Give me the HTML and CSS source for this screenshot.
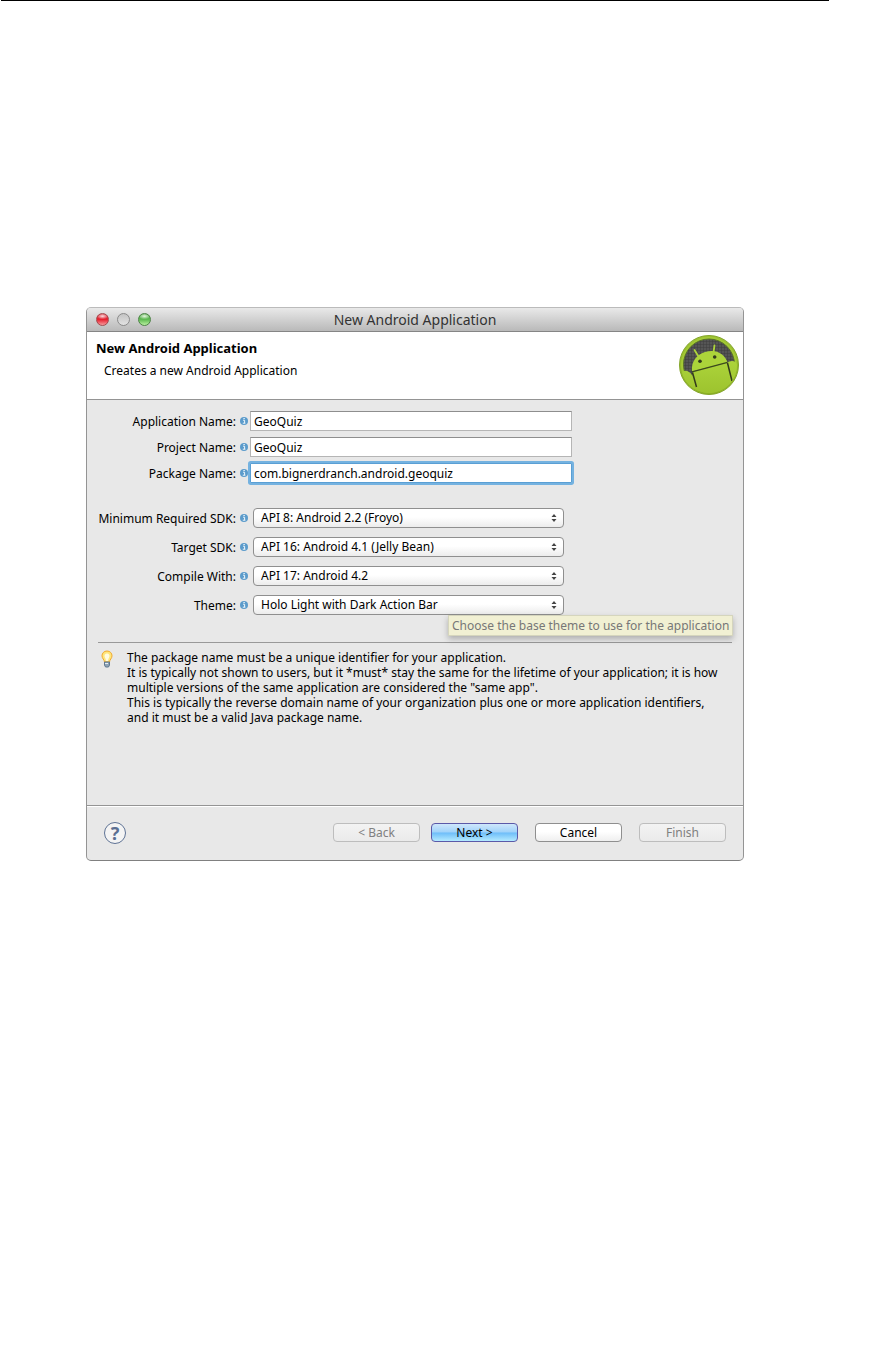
FILE: index.html
```html
<!DOCTYPE html>
<html lang="en">
<head>
    <meta charset="UTF-8">
    <meta name="viewport" content="width=device-width, initial-scale=1.0">
    <link rel="stylesheet" href="styles.css">
    <title>New Android Application</title>
</head>
<body>
    <!-- shared info icon -->
    <svg class="symbols" width="0" height="0">
        <symbol id="info" viewBox="0 0 8 8">
            <circle cx="4" cy="4" r="4" fill="#5b9bcb"/>
            <path d="M3 3.2h1.6v3M2.8 6.2h2.6M3.4 1.5h1.4" stroke="#eef6fb" stroke-width="1" fill="none"/>
        </symbol>
    </svg>
    <div class="page">
        <hr class="page-rule">
        <main class="window">
            <div class="titlebar">
                <div class="lights">
                    <span class="light red"></span>
                    <span class="light gray"></span>
                    <span class="light green"></span>
                </div>
                <span class="window-title">New Android Application</span>
            </div>
            <header class="banner">
                <div>
                    <h1>New Android Application</h1>
                    <p>Creates a new Android Application</p>
                </div>
                <svg class="logo" viewBox="0 0 60 60" width="60" height="60">
                    <defs>
                        <linearGradient id="rim" x1="0" y1="0" x2="0" y2="1">
                            <stop offset="0" stop-color="#9cc233"/>
                            <stop offset="1" stop-color="#8eb324"/>
                        </linearGradient>
                        <linearGradient id="body" x1="0" y1="0" x2="0" y2="1">
                            <stop offset="0" stop-color="#acd43a"/>
                            <stop offset="1" stop-color="#9cc22e"/>
                        </linearGradient>
                        <pattern id="mesh" width="3" height="3" patternUnits="userSpaceOnUse">
                            <rect width="3" height="3" fill="#555"/>
                            <path d="M0 0h3M0 0v3" stroke="#3c3c3c" stroke-width="1"/>
                        </pattern>
                        <clipPath id="inner"><circle cx="30" cy="30" r="28"/></clipPath>
                    </defs>
                    <circle cx="30" cy="30" r="29.5" fill="url(#rim)" stroke="#84a52a" stroke-width="1"/>
                    <circle cx="30" cy="30" r="28" fill="#a4ca35"/>
                    <circle cx="30" cy="29.5" r="25.5" fill="url(#mesh)" stroke="#58702a" stroke-width="1"/>
                    <g clip-path="url(#inner)">
                        <path d="M2 60V38Q6 34 10 37Q12 38 13.5 41V36.5L48.5 27.5Q50 26 53 26Q57 26 58 30V60Z" fill="url(#body)"/>
                        <path d="M13 36.5C12 27 17 20 26 17C37 13.5 46 19 48.5 27.5Z" fill="#acd43a"/>
                        <path d="M15.5 15L19.5 21.5M35.5 10.5L34.5 17" stroke="#acd43a" stroke-width="1.8" stroke-linecap="round"/>
                        <path d="M13 36.8L48.5 27.3" stroke="#3c4a1d" stroke-width="1.3"/>
                        <path d="M13.5 37.5L17.5 52M48.5 28L53 46" stroke="#333b1c" stroke-width="1.5"/>
                        <circle cx="21" cy="26.3" r="1.8" fill="#333b1c"/>
                        <circle cx="35.7" cy="22" r="1.8" fill="#333b1c"/>
                    </g>
                </svg>
            </header>
            <form class="wizard">
                <div class="content">
                    <div class="fields names">
                        <label for="app-name">Application Name: <svg class="info"><use href="#info"/></svg></label>
                        <input type="text" id="app-name" value="GeoQuiz">
                        <label for="project-name">Project Name: <svg class="info"><use href="#info"/></svg></label>
                        <input type="text" id="project-name" value="GeoQuiz">
                        <label for="package-name">Package Name: <svg class="info"><use href="#info"/></svg></label>
                        <input type="text" id="package-name" class="active" value="com.bignerdranch.android.geoquiz">
                    </div>
                    <div class="fields targets">
                        <label for="min-sdk">Minimum Required SDK: <svg class="info"><use href="#info"/></svg></label>
                        <div class="popup">
                            <select id="min-sdk"><option>API 8: Android 2.2 (Froyo)</option></select>
                            <svg class="arrows" viewBox="0 0 6 8"><path d="M3 0L5.5 3H.5ZM3 8L.5 5H5.5Z"/></svg>
                        </div>
                        <label for="target-sdk">Target SDK: <svg class="info"><use href="#info"/></svg></label>
                        <div class="popup">
                            <select id="target-sdk"><option>API 16: Android 4.1 (Jelly Bean)</option></select>
                            <svg class="arrows" viewBox="0 0 6 8"><path d="M3 0L5.5 3H.5ZM3 8L.5 5H5.5Z"/></svg>
                        </div>
                        <label for="compile-with">Compile With: <svg class="info"><use href="#info"/></svg></label>
                        <div class="popup">
                            <select id="compile-with"><option>API 17: Android 4.2</option></select>
                            <svg class="arrows" viewBox="0 0 6 8"><path d="M3 0L5.5 3H.5ZM3 8L.5 5H5.5Z"/></svg>
                        </div>
                        <label for="theme">Theme: <svg class="info"><use href="#info"/></svg></label>
                        <div class="popup">
                            <select id="theme"><option>Holo Light with Dark Action Bar</option></select>
                            <svg class="arrows" viewBox="0 0 6 8"><path d="M3 0L5.5 3H.5ZM3 8L.5 5H5.5Z"/></svg>
                            <div class="tooltip" role="tooltip">Choose the base theme to use for the application</div>
                        </div>
                    </div>
                    <div class="hint">
                        <svg class="bulb" viewBox="0 0 12 18" width="12" height="18">
                            <path d="M6 1C3 1 1 3.2 1 5.8C1 8.5 3.3 9.5 3.5 12H8.5C8.7 9.5 11 8.5 11 5.8C11 3.2 9 1 6 1Z" fill="#ffe67c" stroke="#f0a92e"/>
                            <path d="M6 3.5C4.5 3.5 3.5 4.5 3.5 6C3.5 7.5 5 8.5 5 11H7C7 8.5 8.5 7.5 8.5 6C8.5 4.5 7.5 3.5 6 3.5Z" fill="#fffbe0"/>
                            <path d="M3.5 12H8.5V15L7.5 17H4.5L3.5 15Z" fill="#8fa3b5" stroke="#5f7890"/>
                            <path d="M4 13.5H7" stroke="#e3ecf2"/>
                        </svg>
                        <p>The package name must be a unique identifier for your application.<br>
                        It is typically not shown to users, but it *must* stay the same for the lifetime of your application; it is how<br>
                        multiple versions of the same application are considered the "same app".<br>
                        This is typically the reverse domain name of your organization plus one or more application identifiers,<br>
                        and it must be a valid Java package name.</p>
                    </div>
                </div>
                <footer class="actions">
                    <button type="button" class="help" aria-label="Help">?</button>
                    <div class="nav">
                        <button type="button" class="btn" disabled>&lt; Back</button>
                        <button type="button" class="btn default">Next &gt;</button>
                    </div>
                    <button type="button" class="btn">Cancel</button>
                    <button type="button" class="btn" disabled>Finish</button>
                </footer>
            </form>
        </main>
    </div>
</body>
</html>
```

FILE: styles.css
```css
* {
    box-sizing: border-box;
}

body {
    margin: 0;
    background: #fff;
    color: #000;
    font-family: "Noto Sans", "Open Sans", sans-serif;
    font-size: 12px;
    line-height: 15px;
}

h1, p {
    margin: 0;
}

input, select, button {
    font-family: inherit;
    font-size: 12px;
    color: #000;
}

.symbols {
    position: absolute;
}

.page {
    padding: 0 53px 0 1px;
}

.page-rule {
    height: 1px;
    margin: 0 0 306px;
    border: 0;
    background: #000;
}

/* Window frame */
.window {
    margin: 0 85px;
    border: 1px solid #949494;
    border-top-color: #bbb;
    border-bottom-color: #808080;
    border-radius: 5px;
    background: #e8e8e8;
}

.titlebar {
    display: grid;
    grid-template-columns: 1fr auto 1fr;
    align-items: center;
    height: 24px;
    border-bottom: 1px solid #858585;
    border-radius: 4px 4px 0 0;
    background: linear-gradient(#e9e9e9, #b9b9b9);
}

.lights {
    display: flex;
    gap: 8px;
    padding-left: 9px;
}

.light {
    width: 13px;
    height: 13px;
    border: 1px solid #8a8a8a;
    border-radius: 50%;
}

.red {
    border-color: #a34a4e;
    background: radial-gradient(ellipse 6px 3px at 50% 20%, #fbe0e2, transparent), linear-gradient(#d8323e, #e8202f 50%, #f79a9c);
}

.gray {
    background: linear-gradient(#c4c4c4, #e2e2e2);
}

.green {
    border-color: #4c8345;
    background: radial-gradient(ellipse 6px 3px at 50% 20%, #e6f8df, transparent), linear-gradient(#5aa852, #5fbb52 50%, #b9f0a0);
}

.window-title {
    font-size: 14px;
    color: #333;
}

/* Banner */
.banner {
    display: flex;
    justify-content: space-between;
    height: 68px;
    padding: 3px 4px 3px 9px;
    border-bottom: 1px solid #949494;
    background: #fff;
}

.banner h1 {
    padding-top: 4px;
    font-size: 13px;
    line-height: 18px;
}

.banner p {
    padding: 6px 0 0 8px;
}

/* Form */
.content {
    min-height: 406px;
    padding: 11px;
    border-bottom: 1px solid #949494;
}

.fields {
    display: grid;
    grid-template-columns: 150px minmax(0, 322px);
    column-gap: 2px;
    align-items: center;
}

.fields label {
    display: flex;
    justify-content: flex-end;
    align-items: center;
    gap: 4px;
    white-space: nowrap;
}

.info {
    width: 8px;
    height: 8px;
}

.names {
    row-gap: 6px;
}

.names input {
    height: 20px;
    padding: 0 3px;
    border: 1px solid #b5b5b5;
    border-top-color: #8e8e8e;
    background: #fff;
    outline: none;
}

.names .active {
    border-color: #5a9fd4;
    border-radius: 1px;
    box-shadow: 0 0 0 2px #74b2e0;
}

.targets {
    row-gap: 9px;
    padding: 25px 0 27px;
    border-bottom: 1px solid #999;
}

.popup {
    position: relative;
    display: flex;
    margin: 0 8px 0 3px;
}

.popup select {
    width: 100%;
    height: 20px;
    padding: 0 20px 1px 7px;
    border: 1px solid #8f8f8f;
    border-radius: 4px;
    background: linear-gradient(#fff, #fff 45%, #ececec);
    appearance: none;
}

.arrows {
    position: absolute;
    top: 6px;
    right: 7px;
    width: 6px;
    height: 8px;
    fill: #444;
    pointer-events: none;
}

.tooltip {
    position: absolute;
    top: 20px;
    left: 195px;
    z-index: 1;
    padding: 2px 3px;
    border: 1px solid #d5d5bd;
    background: #f1f0d3;
    box-shadow: 0 3px 6px rgba(0, 0, 0, 0.25);
    color: #777;
    white-space: nowrap;
}

.hint {
    display: flex;
    align-items: flex-start;
    gap: 14px;
    padding: 7px 0 0 3px;
    white-space: nowrap;
}

/* Bottom buttons */
.actions {
    display: flex;
    align-items: center;
    gap: 17px;
    height: 54px;
    padding: 0 17px 2px;
    border-top: 1px solid #fff;
}

.help {
    width: 22px;
    height: 22px;
    margin-right: auto;
    padding: 0;
    border: 1px solid #5f7395;
    border-radius: 50%;
    background: #f4f4f4;
    color: #5b6f92;
    font-size: 18px;
    font-weight: bold;
    line-height: 18px;
}

.nav {
    display: flex;
    gap: 11px;
}

.btn {
    width: 87px;
    height: 19px;
    padding: 0;
    border: 1px solid #8f8f8f;
    border-radius: 4px;
    background: linear-gradient(#fff, #fff 45%, #efefef);
    line-height: 15px;
}

.btn:disabled {
    border-color: #bdbdbd;
    background: linear-gradient(#f3f3f3, #eaeaea);
    color: #808080;
}

.default {
    border-color: #5b59a8;
    background: linear-gradient(#cfe7fb, #9fd2fa 48%, #6dbdf9 52%, #b4eaff);
}
```
